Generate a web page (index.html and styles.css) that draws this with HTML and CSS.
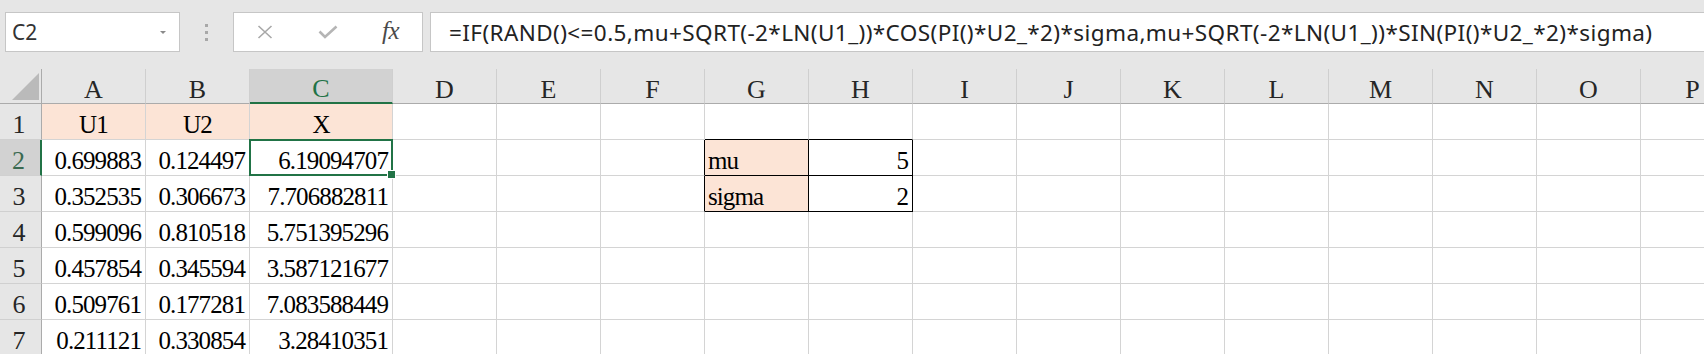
FILE: index.html
```html
<!DOCTYPE html>
<html lang="zh-Hant">
<head>
<meta charset="utf-8">
<title>Excel</title>
<link rel="stylesheet" href="styles.css">
</head>
<body>
<div class="fbar">
  <div class="namebox"><span>C2</span><svg class="dd" width="6" height="3" viewBox="0 0 6 3"><polygon points="0,0 6,0 3,3" fill="#8a8a8a"/></svg></div>
  <div class="grip"><i></i><i></i><i></i></div>
  <div class="fxbox">
    <svg class="ic-x" width="16" height="14" viewBox="0 0 16 14"><path d="M1.5 1 L14.5 13 M14.5 1 L1.5 13" stroke="#a8a8a8" stroke-width="1.6" fill="none"/></svg>
    <svg class="ic-ok" width="20" height="14" viewBox="0 0 20 14"><path d="M1.5 6.5 L7 12 L18.5 1.5" stroke="#b5b5b5" stroke-width="2.6" fill="none"/></svg>
    <span class="fx">fx</span>
  </div>
  <div class="formula">=IF(RAND()&lt;=0.5,mu+SQRT(-2*LN(U1_))*COS(PI()*U2_*2)*sigma,mu+SQRT(-2*LN(U1_))*SIN(PI()*U2_*2)*sigma)</div>
</div>
<div class="sheet">
  <div class="corner"><svg width="42" height="35" viewBox="0 0 42 35"><polygon points="39,4 39,31 12,31" fill="#bababa"/></svg></div>
  <div class="ch">A</div><div class="ch">B</div><div class="ch sel">C</div><div class="ch">D</div><div class="ch">E</div><div class="ch">F</div><div class="ch">G</div><div class="ch">H</div><div class="ch">I</div><div class="ch">J</div><div class="ch">K</div><div class="ch">L</div><div class="ch">M</div><div class="ch">N</div><div class="ch">O</div><div class="ch">P</div>

  <div class="rh">1</div>
  <div class="c peach ctr">U1</div><div class="c peach ctr">U2</div><div class="c peach ctr">X</div><div class="c"></div><div class="c"></div><div class="c"></div><div class="c bb-b"></div><div class="c bb-b"></div><div class="c"></div><div class="c"></div><div class="c"></div><div class="c"></div><div class="c"></div><div class="c"></div><div class="c"></div><div class="c"></div>

  <div class="rh sel">2</div>
  <div class="c num">0.699883</div><div class="c num">0.124497</div><div class="c num active">6.19094707</div><div class="c"></div><div class="c"></div><div class="c bb-r"></div><div class="c peach lft bb-r bb-b">mu</div><div class="c num bb-r bb-b">5</div><div class="c"></div><div class="c"></div><div class="c"></div><div class="c"></div><div class="c"></div><div class="c"></div><div class="c"></div><div class="c"></div>

  <div class="rh">3</div>
  <div class="c num">0.352535</div><div class="c num">0.306673</div><div class="c num">7.706882811</div><div class="c"></div><div class="c"></div><div class="c bb-r"></div><div class="c peach lft bb-r bb-b">sigma</div><div class="c num bb-r bb-b">2</div><div class="c"></div><div class="c"></div><div class="c"></div><div class="c"></div><div class="c"></div><div class="c"></div><div class="c"></div><div class="c"></div>

  <div class="rh">4</div>
  <div class="c num">0.599096</div><div class="c num">0.810518</div><div class="c num">5.751395296</div><div class="c"></div><div class="c"></div><div class="c"></div><div class="c"></div><div class="c"></div><div class="c"></div><div class="c"></div><div class="c"></div><div class="c"></div><div class="c"></div><div class="c"></div><div class="c"></div><div class="c"></div>

  <div class="rh">5</div>
  <div class="c num">0.457854</div><div class="c num">0.345594</div><div class="c num">3.587121677</div><div class="c"></div><div class="c"></div><div class="c"></div><div class="c"></div><div class="c"></div><div class="c"></div><div class="c"></div><div class="c"></div><div class="c"></div><div class="c"></div><div class="c"></div><div class="c"></div><div class="c"></div>

  <div class="rh">6</div>
  <div class="c num">0.509761</div><div class="c num">0.177281</div><div class="c num">7.083588449</div><div class="c"></div><div class="c"></div><div class="c"></div><div class="c"></div><div class="c"></div><div class="c"></div><div class="c"></div><div class="c"></div><div class="c"></div><div class="c"></div><div class="c"></div><div class="c"></div><div class="c"></div>

  <div class="rh">7</div>
  <div class="c num">0.211121</div><div class="c num">0.330854</div><div class="c num">3.28410351</div><div class="c"></div><div class="c"></div><div class="c"></div><div class="c"></div><div class="c"></div><div class="c"></div><div class="c"></div><div class="c"></div><div class="c"></div><div class="c"></div><div class="c"></div><div class="c"></div><div class="c"></div>
</div>
</body>
</html>
```

FILE: styles.css
```css
* { box-sizing: border-box; }
html, body { margin: 0; padding: 0; }
body {
  width: 1704px;
  height: 354px;
  overflow: hidden;
  background: #e6e6e6;
}

/* formula bar */
.fbar {
  display: flex;
  align-items: flex-start;
  height: 69px;
  padding: 12px 0 0 5px;
}
.namebox {
  width: 175px;
  height: 40px;
  background: #fff;
  border: 1px solid #c6c6c6;
  display: flex;
  align-items: center;
  justify-content: space-between;
  padding: 0 13px 0 6px;
  font-family: "Noto Sans", sans-serif;
  font-size: 21px;
  color: #333;
}
.grip {
  width: 53px;
  height: 40px;
  display: flex;
  flex-direction: column;
  align-items: center;
  justify-content: center;
  gap: 4px;
}
.grip i {
  display: block;
  width: 3px;
  height: 3px;
  background: #a8a8a8;
}
.fxbox {
  width: 190px;
  height: 40px;
  background: #fff;
  border: 1px solid #c6c6c6;
  display: flex;
  align-items: center;
  padding-left: 23px;
}
.ic-x { margin-right: 45px; }
.ic-ok { margin-right: 44px; }
.fx {
  font-family: "Liberation Serif", serif;
  font-style: italic;
  font-size: 25px;
  color: #4a4a4a;
  letter-spacing: -0.5px;
  padding-bottom: 2px;
}
.formula {
  flex: 1;
  margin-left: 7px;
  height: 40px;
  background: #fff;
  border: 1px solid #c6c6c6;
  border-right: none;
  display: flex;
  align-items: center;
  padding-left: 18px;
  font-family: "Noto Sans", sans-serif;
  font-size: 22.5px;
  letter-spacing: 0.4px;
  color: #222;
  white-space: nowrap;
  overflow: hidden;
}

/* sheet */
.sheet {
  display: grid;
  grid-template-columns: 42px 104px 104px 143px repeat(13, 104px);
  grid-template-rows: 35px repeat(7, 36px);
  width: 1745px;
  font-family: "Liberation Serif", "Noto Sans CJK TC", serif;
  font-size: 25px;
  letter-spacing: -0.9px;
  line-height: 26px;
}
.corner {
  border-right: 1px solid #ababab;
  border-bottom: 1px solid #ababab;
}
.corner svg { display: block; }
.ch {
  display: flex;
  align-items: flex-end;
  justify-content: center;
  border-right: 1px solid #cfcfcf;
  border-bottom: 1px solid #ababab;
  color: #262626;
  font-size: 26px;
  letter-spacing: 0;
}
.ch.sel {
  background: #d2d2d2;
  color: #217346;
  border-bottom: 2px solid #217346;
}
.rh {
  display: flex;
  align-items: flex-end;
  justify-content: center;
  padding-bottom: 1px;
  padding-right: 3px;
  border-right: 1px solid #ababab;
  border-bottom: 1px solid #d0d0d0;
  color: #262626;
  font-size: 26px;
  letter-spacing: 0;
}
.rh.sel {
  background: #d2d2d2;
  color: #3b6a51;
  border-right: 2px solid #217346;
}
.c {
  display: flex;
  align-items: flex-end;
  padding: 0 4px 1px 4px;
  background: #fff;
  border-right: 1px solid #d4d4d4;
  border-bottom: 1px solid #d4d4d4;
  color: #000;
  white-space: nowrap;
}
.peach { background: #fce4d6; }
.num { justify-content: flex-end; }
.ctr { justify-content: center; }
.lft { justify-content: flex-start; padding-left: 3px; }
.bb-r { border-right-color: #000; }
.bb-b { border-bottom-color: #000; }

.active { position: relative; }
.active::after {
  content: "";
  position: absolute;
  left: -1px;
  top: -1px;
  right: -1px;
  bottom: -1px;
  border: 2px solid #217346;
}
.active::before {
  content: "";
  position: absolute;
  right: -4px;
  bottom: -4px;
  width: 7px;
  height: 7px;
  background: #217346;
  border: 1px solid #fff;
  z-index: 1;
}
```
